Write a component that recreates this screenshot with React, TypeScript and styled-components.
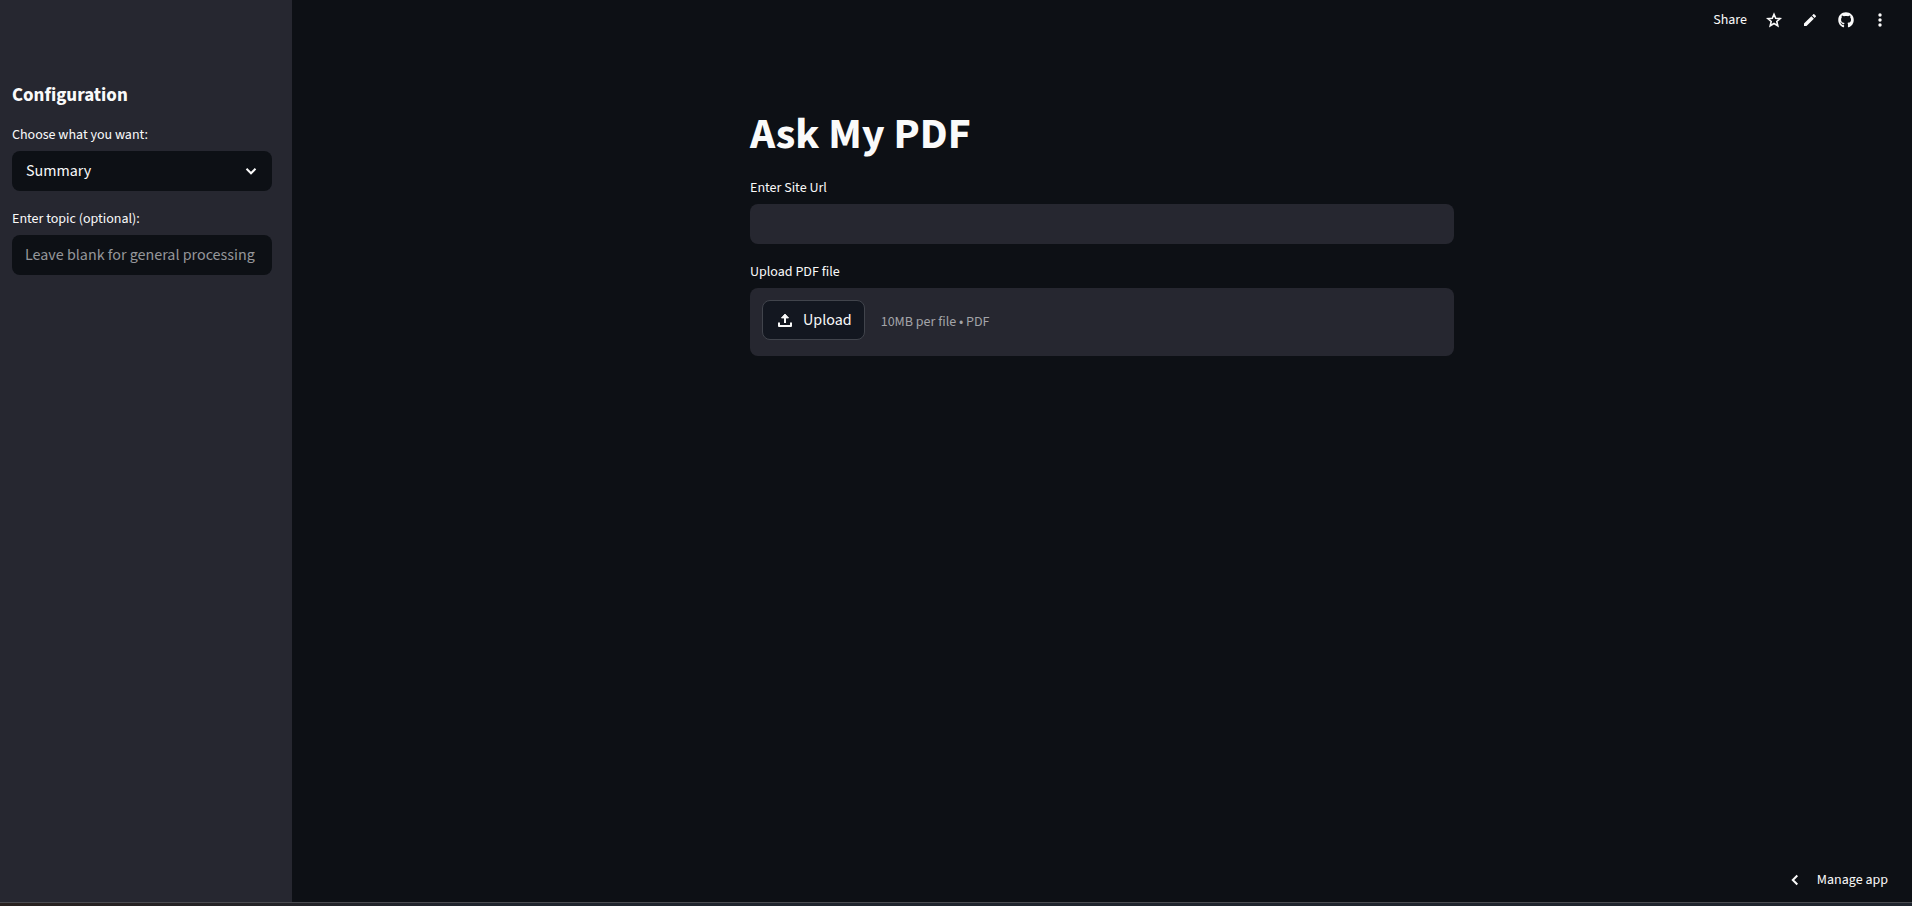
import React from "react";
import styled, { createGlobalStyle } from "styled-components";
import { MdEdit } from "react-icons/md";
import { FaGithub } from "react-icons/fa";

const color = {
  page: "#0d1015",
  panel: "#262730",
  text: "#fafafa",
  muted: "#a3a4a8",
  placeholder: "#95969a",
  button: "#131720",
  line: "#41444c",
};

const GlobalStyle = createGlobalStyle`
  *, *::before, *::after { box-sizing: border-box; }
  body {
    margin: 0;
    background: ${color.page};
    color: ${color.text};
    font-family: "Source Sans 3", "Source Sans Pro", "Noto Sans CJK SC", sans-serif;
    font-size: 16px;
  }
  button, input, select { font: inherit; color: inherit; }
`;

const Page = styled.div`
  min-height: 100vh;
  display: flex;
  flex-direction: column;
`;

const Columns = styled.div`
  flex: 1;
  display: flex;
`;

const BottomEdge = styled.footer`
  height: 4px;
  border-top: 1px solid #4a4b50;
  background: linear-gradient(to right, #28211f, #20252e 25%);
`;

const Sidebar = styled.aside`
  flex: none;
  width: 292px;
  padding: 82px 20px 24px 12px;
  background: ${color.panel};
`;

const SidebarTitle = styled.h2`
  margin: 0 0 13px;
  font-size: 19px;
  line-height: 28px;
  font-weight: 700;
`;

const Main = styled.main`
  flex: 1;
  display: flex;
  flex-direction: column;
`;

const Toolbar = styled.header`
  display: flex;
  justify-content: flex-end;
  align-items: center;
  height: 40px;
  padding-right: 25px;
  gap: 18px;
`;

const ToolButton = styled.button`
  display: flex;
  align-items: center;
  justify-content: center;
  height: 24px;
  padding: 0;
  border: 0;
  background: none;
  font-size: 14px;
  cursor: pointer;
`;

const IconButton = styled(ToolButton)<{ $width: number }>`
  width: ${(p) => p.$width}px;
`;

const Content = styled.div`
  flex: 1;
  width: 100%;
  max-width: 704px;
  margin: 0 auto;
  padding-top: 69px;
`;

const Title = styled.h1`
  margin: 0 0 15px;
  font-size: 44px;
  line-height: 52px;
  font-weight: 700;
`;

const Fields = styled.div`
  display: flex;
  flex-direction: column;
  gap: 16px;
`;

const Field = styled.div`
  display: flex;
  flex-direction: column;
  gap: 4px;
`;

const Label = styled.label`
  font-size: 14px;
  line-height: 24px;
`;

const TextInput = styled.input<{ $fill: string }>`
  width: 100%;
  height: 40px;
  padding: 0 13px;
  border: 0;
  border-radius: 8px;
  background: ${(p) => p.$fill};
  &::placeholder { color: ${color.placeholder}; opacity: 1; }
`;

const SelectBox = styled.div`
  display: grid;
  align-items: center;
  > * { grid-area: 1 / 1; }
  svg { justify-self: end; margin-right: 14px; pointer-events: none; }
`;

const Select = styled.select`
  appearance: none;
  width: 100%;
  height: 40px;
  padding: 0 40px 0 14px;
  border: 0;
  border-radius: 8px;
  background: ${color.page};
`;

const Dropzone = styled.div`
  display: flex;
  align-items: flex-start;
  gap: 16px;
  padding: 12px;
  border-radius: 8px;
  background: ${color.panel};
`;

const UploadButton = styled.button`
  display: flex;
  align-items: center;
  gap: 10px;
  height: 40px;
  padding: 0 12px 0 14px;
  border: 1px solid ${color.line};
  border-radius: 8px;
  background: ${color.button};
  cursor: pointer;
`;

const Hint = styled.span`
  font-size: 14px;
  line-height: 44px;
  color: ${color.muted};
`;

const ManageBar = styled.div`
  display: flex;
  justify-content: flex-end;
  padding: 0 24px 10px 0;
`;

const ManageButton = styled(ToolButton)`
  gap: 15px;
`;

const Chevron = ({ d }: { d: string }) => (
  <svg width="14" height="14" viewBox="0 0 14 14" fill="none" stroke="currentColor" strokeWidth="2" aria-hidden="true">
    <path d={d} />
  </svg>
);

const StarIcon = () => (
  <svg width="18" height="18" viewBox="0 0 18 18" fill="none" stroke="currentColor" strokeWidth="1.6" aria-hidden="true">
    <path d="M9 3.2l1.7 4 4.4.4-3.3 2.9 1 4.3L9 12.5l-3.8 2.3 1-4.3-3.3-2.9 4.4-.4z" />
  </svg>
);

const UploadIcon = () => (
  <svg width="16" height="16" viewBox="0 0 16 16" fill="none" stroke="currentColor" strokeWidth="2" aria-hidden="true">
    <path d="M8 11V4" />
    <path d="M8 2.1 11.5 5.9h-7Z" fill="currentColor" strokeWidth="1" strokeLinejoin="round" />
    <path d="M2 10.5V14h12v-3.5" strokeLinejoin="round" />
  </svg>
);

const MoreIcon = () => (
  <svg width="14" height="16" viewBox="0 0 14 16" fill="currentColor" aria-hidden="true">
    <circle cx="7" cy="3" r="1.7" />
    <circle cx="7" cy="8" r="1.7" />
    <circle cx="7" cy="13" r="1.7" />
  </svg>
);

export default function App() {
  const file = React.useRef<HTMLInputElement>(null);
  return (
    <Page>
      <GlobalStyle />
      <Columns>
        <Sidebar>
          <SidebarTitle>Configuration</SidebarTitle>
          <Fields>
            <Field>
              <Label htmlFor="mode">Choose what you want:</Label>
              <SelectBox>
                <Select id="mode">
                  <option>Summary</option>
                </Select>
                <Chevron d="M2.5 4.8 7 9.3l4.5-4.5" />
              </SelectBox>
            </Field>
            <Field>
              <Label htmlFor="topic">Enter topic (optional):</Label>
              <TextInput id="topic" $fill={color.page} placeholder="Leave blank for general processing" />
            </Field>
          </Fields>
        </Sidebar>
        <Main>
          <Toolbar>
            <ToolButton>Share</ToolButton>
            <IconButton $width={18} aria-label="Favorite"><StarIcon /></IconButton>
            <IconButton $width={18} aria-label="Edit"><MdEdit size={16} /></IconButton>
            <IconButton $width={18} aria-label="GitHub"><FaGithub size={16} /></IconButton>
            <IconButton $width={14} aria-label="More"><MoreIcon /></IconButton>
          </Toolbar>
          <Content>
            <Title>Ask My PDF</Title>
            <Fields>
              <Field>
                <Label htmlFor="url">Enter Site Url</Label>
                <TextInput id="url" type="url" $fill={color.panel} />
              </Field>
              <Field>
                <Label htmlFor="pdf">Upload PDF file</Label>
                <Dropzone>
                  <input id="pdf" ref={file} type="file" accept="application/pdf" hidden />
                  <UploadButton type="button" onClick={() => file.current?.click()}>
                    <UploadIcon />
                    Upload
                  </UploadButton>
                  <Hint>10MB per file • PDF</Hint>
                </Dropzone>
              </Field>
            </Fields>
          </Content>
          <ManageBar>
            <ManageButton>
              <Chevron d="M9.3 2.5 4.8 7l4.5 4.5" />
              Manage app
            </ManageButton>
          </ManageBar>
        </Main>
      </Columns>
      <BottomEdge />
    </Page>
  );
}
